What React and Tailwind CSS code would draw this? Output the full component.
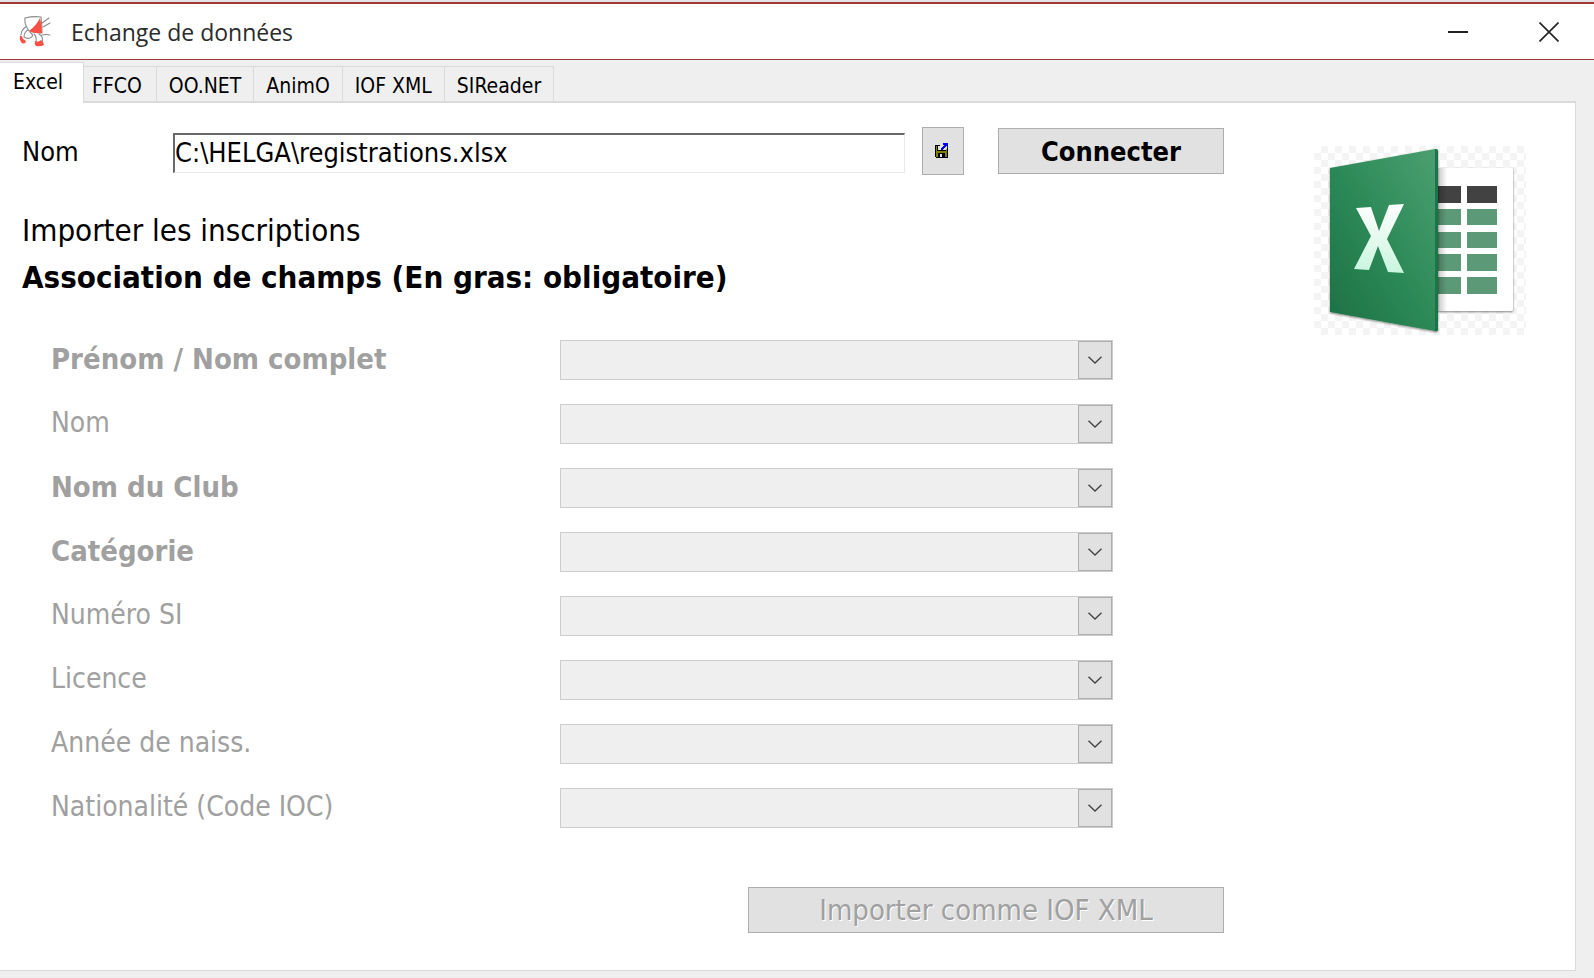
import clsx from 'clsx'

const tabs = ['Excel', 'FFCO', 'OO.NET', 'AnimO', 'IOF XML', 'SIReader']

const fields = [
    { id: 'prenom', label: 'Prénom / Nom complet', required: true },
    { id: 'nom', label: 'Nom' },
    { id: 'club', label: 'Nom du Club', required: true },
    { id: 'categorie', label: 'Catégorie', required: true },
    { id: 'numero-si', label: 'Numéro SI' },
    { id: 'licence', label: 'Licence' },
    { id: 'naissance', label: 'Année de naiss.' },
    { id: 'nationalite', label: 'Nationalité (Code IOC)' },
]

export default function App() {
    return (
        <div className="min-h-screen flex flex-col bg-[#efefef] text-black font-['DejaVu_Sans_Condensed','Noto_Sans',sans-serif]">
            <TitleBar />
            <TabBar />
            <main className="flex-1 mr-[18px] mb-[7px] bg-white border-r border-b border-[#dadada] pt-[23px]">
                <div className="flex items-start">
                    <div className="w-[1224px] shrink-0 pl-[22px]">
                        <FileRow />
                        <h2 className="mt-[31px] text-[31px] leading-[47px]">Importer les inscriptions</h2>
                        <h1 className="text-[31px] leading-[47px] font-bold">Association de champs (En gras: obligatoire)</h1>
                    </div>
                    <ExcelLogo className="w-[212px] h-[189px] ml-[90px] mt-[20px] shrink-0" />
                </div>
                <FieldList />
                <div className="w-[1224px] flex justify-end mt-[59px]">
                    <button type="button" disabled className="w-[476px] h-[46px] bg-[#e1e1e1] border border-[#adadad] text-[29px] leading-[44px] text-[#a0a0a0] [text-shadow:1px_1px_0_#fff]">
                        Importer comme IOF XML
                    </button>
                </div>
            </main>
        </div>
    )
}

function TitleBar() {
    return (
        <header className="border-t-2 border-[#e5e5e5]">
            <div className="h-[58px] flex items-center border-t-2 border-b border-[#a4373a] bg-white">
                <RunnerIcon className="w-[32px] h-[32px] ml-[19px]" />
                <span className="ml-5 flex-1 text-[23px] leading-[32px] text-[#2b2b2b] font-['Open_Sans','Noto_Sans',sans-serif]">Echange de données</span>
                <button type="button" aria-label="Réduire" className="w-[92px] h-full flex items-center justify-center">
                    <svg width="20" height="20" viewBox="0 0 20 20">
                        <path d="M0 10h20" stroke="#222" strokeWidth="2" />
                    </svg>
                </button>
                <button type="button" aria-label="Fermer" className="w-[90px] h-full flex items-center justify-center">
                    <svg width="20" height="20" viewBox="0 0 20 20">
                        <path d="M.5.5l19 19M19.5.5l-19 19" stroke="#222" strokeWidth="1.6" />
                    </svg>
                </button>
            </div>
        </header>
    )
}

function TabBar() {
    return (
        <div role="tablist" className="flex items-end pt-[2px] mr-[18px] border-b-2 border-[#dadada] text-[21px] leading-[30px]">
            {tabs.map((tab, i) => (
                <button
                    key={tab}
                    type="button"
                    role="tab"
                    aria-selected={i === 0}
                    className={clsx(
                        'border-t border-r border-[#dadada]',
                        i === 0 ? 'h-[41px] -mb-[2px] pb-[2px] bg-white pl-[13px] pr-5' : 'h-[35px] pt-[3px]',
                        i === 1 && 'pl-2 pr-[14px]',
                        i > 1 && 'px-3'
                    )}
                >
                    {tab}
                </button>
            ))}
        </div>
    )
}

function FileRow() {
    return (
        <div className="flex items-center h-[50px]">
            <label htmlFor="fichier" className="w-[151px] pt-[2px] text-[27px] leading-[36px]">Nom</label>
            <input
                id="fichier"
                type="text"
                defaultValue="C:\HELGA\registrations.xlsx"
                className="flex-1 min-w-0 h-[40px] mt-1 pb-[2px] text-[27px] leading-[34px] bg-white border-t-2 border-l-2 border-r border-b border-t-[#696969] border-l-[#696969] border-r-[#e9e9e9] border-b-[#e9e9e9] outline-none"
            />
            <button type="button" aria-label="Choisir un fichier" className="ml-[17px] w-[42px] h-[48px] pb-[2px] pr-[2px] flex items-center justify-center bg-[#e1e1e1] border border-[#adadad]">
                <DiskIcon className="w-[14px] h-[15px]" />
            </button>
            <button type="button" className="ml-[34px] w-[226px] h-[46px] pt-px bg-[#e1e1e1] border border-[#adadad] text-[27px] leading-[42px] font-bold">
                Connecter
            </button>
        </div>
    )
}

function FieldList() {
    return (
        <form className="mt-[5px] pl-[51px] flex flex-col gap-6 leading-[40px] text-[#a0a0a0]">
            {fields.map((field) => (
                <div key={field.id} className="flex h-[40px]">
                    <label htmlFor={field.id} className={clsx('w-[509px] -mt-px', field.required ? 'text-[29px] font-bold' : 'text-[28px]')}>
                        {field.label}
                    </label>
                    <div className="relative w-[553px]">
                        <select id={field.id} disabled className="appearance-none w-full h-full bg-[#efefef] border border-[#ccc] opacity-100" />
                        <span className="absolute right-px top-px bottom-px w-[34px] flex items-center justify-center bg-[#e1e1e1] border border-[#adadad] pointer-events-none">
                            <svg width="14" height="8" viewBox="0 0 14 8" fill="none">
                                <path d="M.5.7L7 7l6.500-6.300" stroke="#404040" strokeWidth="1.300" />
                            </svg>
                        </span>
                    </div>
                </div>
            ))}
        </form>
    )
}

/* ─── Inline SVG Icons ─── */

function RunnerIcon({ className }) {
    return (
        <svg className={className} viewBox="0 0 32 32" fill="none" stroke="#8c8c8c" strokeWidth="1.1" strokeLinecap="round">
            <path d="M23 7l7-5M24 11l7-4M23 19q4-1 8 0M8 10q-6 4-6 9M10 13q-5 3-5 8M11 16q5 4 0 6-3 1-6-1M15 18q3 3 2 8M20 18q5 3 3 8" />
            <path d="M6 2q8-2 16-1 1 8 1 16-7 0-13-2Q5 8 6 2z" fill="#fff" />
            <path d="M21 2q2 7 2 15-7 1-13-2 7-5 11-13z" fill="#fb4f43" stroke="none" />
            <path d="M1 20q2-1 3 3 3 1 3 3-3 3-5 0-2-3-1-6zM16 25q3 2 6-1 3 2 3 5-4 2-8 1-2-2-1-5z" fill="#fb4f43" stroke="none" />
        </svg>
    )
}

function DiskIcon({ className }) {
    return (
        <svg className={className} viewBox="0 0 14 15" shapeRendering="crispEdges">
            <path d="M0 2h5v5h8v8H1l-1-1z" fill="#000" />
            <path d="M1 3h1v5h9V6h1v8h-2v-4H3v4H1z" fill="#808000" />
            <path d="M3 3h4v1H5v3H3zM5 11h2v3H5z" fill="#e1e1e1" />
            <path d="M12 5h1v3h-1z" fill="#000" />
            <path d="M8 0h5v5h-1V3h-1v1h-1v1H9v1H8v1H6V5h1V4h1V3h1V2H8z" fill="#0000f0" />
        </svg>
    )
}

function ExcelLogo({ className }) {
    return (
        <svg className={className} viewBox="0 0 212 189" role="img" aria-label="Excel">
            <defs>
                <pattern id="damier" width="14" height="14" patternUnits="userSpaceOnUse">
                    <path d="M7 0h7v7H7zM0 7h7v7H0z" fill="#f4f4f4" />
                </pattern>
                <linearGradient id="couverture" x1="0" y1="1" x2="1" y2="0">
                    <stop offset="0" stopColor="#1c7044" />
                    <stop offset=".5" stopColor="#2d8a58" />
                    <stop offset="1" stopColor="#4ca072" />
                </linearGradient>
                <linearGradient id="croix" x1="0" y1="0" x2="0" y2="1">
                    <stop offset="0" stopColor="#fff" />
                    <stop offset="1" stopColor="#c9f5dd" />
                </linearGradient>
                <linearGradient id="pli" x1="0" y1="0" x2="1" y2="0">
                    <stop offset="0" stopColor="#000" stopOpacity=".22" />
                    <stop offset="1" stopColor="#000" stopOpacity="0" />
                </linearGradient>
                <filter id="ombre" x="-10%" y="-10%" width="120%" height="120%">
                    <feDropShadow dx="0" dy="1" stdDeviation="1.200" floodOpacity=".5" />
                </filter>
            </defs>
            <rect width="212" height="189" fill="url(#damier)" />
            <rect x="100" y="22" width="99" height="143" rx="2" fill="#fff" filter="url(#ombre)" />
            <path d="M124 40h23v17h-23zM153 40h30v17h-30z" fill="#424242" />
            <path d="M124 63h23v16h-23zM153 63h30v16h-30zM124 86h23v16h-23zM153 86h30v16h-30zM124 108h23v17h-23zM153 108h30v17h-30zM124 131h23v17h-23zM153 131h30v17h-30z" fill="#5c9a77" />
            <path d="M124 22h9v143h-9z" fill="url(#pli)" />
            <path d="M16 22L121 3q3 0 3 2v178q0 3-3 2L16 166z" fill="url(#couverture)" filter="url(#ombre)" />
            <path d="M121 3q3 0 3 2v178q0 3-3 2z" fill="#1b7547" />
            <path d="M42 62l15-1 8 24 10-26 15-1-17 35 17 34-16-1-10-26-9 24-15-1 17-33z" fill="url(#croix)" />
        </svg>
    )
}
